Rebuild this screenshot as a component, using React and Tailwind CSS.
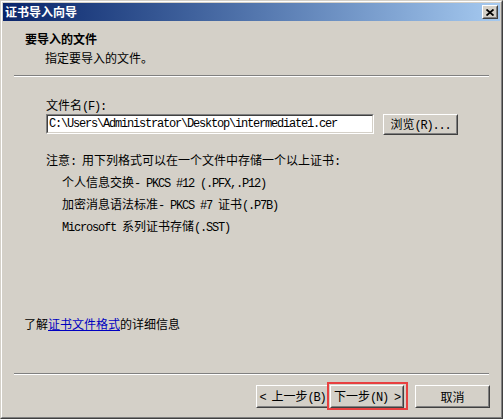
import React from 'react';

const cjk = "font-['Noto_Sans_CJK_SC',sans-serif] text-[12px] leading-[16px] text-black";
const mono = "font-['Liberation_Mono','Noto_Sans_CJK_SC',monospace] text-[12px] tracking-[-1.2px]";

const L = ({ children }) => <span className={mono}>{children}</span>;

// raised 3D button frame, win2000 style
const Raised = ({ className = '', children }) => (
    <div className={`border border-t-white border-l-white border-r-[#404040] border-b-[#404040] ${className}`}>
        <div className="w-full h-full border border-t-[#d4d0c8] border-l-[#d4d0c8] border-r-[#808080] border-b-[#808080] bg-[#d4d0c8] flex items-center justify-center">
            {children}
        </div>
    </div>
);

const Separator = () => (
    <div className="mx-[11px]">
        <div className="h-px bg-[#808080]" />
        <div className="h-px bg-white" />
    </div>
);

export default function App() {
    return (
        <div className={`w-[503px] h-[419px] border border-t-[#d4d0c8] border-l-[#d4d0c8] border-r-[#404040] border-b-[#404040] ${cjk}`}>
            <div className="w-full h-full flex flex-col border border-t-white border-l-white border-r-[#808080] border-b-[#808080] bg-[#d4d0c8] p-px">
                {/* title bar */}
                <div className="h-[18px] flex items-center justify-between bg-linear-to-r from-[#0a246a] to-[#a6caf0] pl-[2px] pr-[2px]">
                    <span className="text-white font-bold text-[12px] leading-[16px]">证书导入向导</span>
                    <Raised className="w-[16px] h-[14px]">
                        <svg width="8" height="7" viewBox="0 0 8 7">
                            <path d="M0.5 0.5 L7.5 6.5 M7.5 0.5 L0.5 6.5" stroke="#000" strokeWidth="1.8" />
                        </svg>
                    </Raised>
                </div>

                {/* header */}
                <div className="pl-[22px] pt-[10px]">
                    <div className="font-bold h-[16px]">要导入的文件</div>
                    <div className="ml-[20px] mt-[3px] h-[16px]">指定要导入的文件。</div>
                </div>
                <div className="mt-[9px]">
                    <Separator />
                </div>

                {/* content */}
                <div className="flex-1 flex flex-col pl-[43px]">
                    <div className="mt-[20px] h-[16px]">文件名<L>(F):</L></div>
                    <div className="flex items-start mt-px">
                        <div className="w-[328px] h-[20px] border border-t-[#808080] border-l-[#808080] border-r-white border-b-white">
                            <div className="w-full h-full border border-t-[#404040] border-l-[#404040] border-r-[#d4d0c8] border-b-[#d4d0c8] bg-white flex items-center pl-px">
                                <span className={`${mono} leading-[14px]`}>{"C:\\Users\\Administrator\\Desktop\\intermediate1.cer"}</span>
                            </div>
                        </div>
                        <Raised className="w-[75px] h-[21px] ml-[9px]">
                            <span>浏览<L>(R)...</L></span>
                        </Raised>
                    </div>
                    <div className="mt-[17px] h-[16px]">注意<L>: </L>用下列格式可以在一个文件中存储一个以上证书<L>:</L></div>
                    <div className="ml-[16px] mt-[6px] flex flex-col gap-[6px]">
                        <div className="h-[16px]">个人信息交换<L>- PKCS #12 (.PFX,.P12)</L></div>
                        <div className="h-[16px]">加密消息语法标准<L>- PKCS #7 </L>证书<L>(.P7B)</L></div>
                        <div className="h-[16px]"><L>Microsoft </L>系列证书存储<L>(.SST)</L></div>
                    </div>
                </div>

                <div className="pl-[21px] mb-[41px] h-[16px]">
                    了解<span className="text-[#0000c0] underline">证书文件格式</span>的详细信息
                </div>

                <Separator />

                {/* buttons */}
                <div className="flex items-center justify-end pr-[10px] pt-[10px] pb-[8px]">
                    <Raised className="w-[73px] h-[23px]">
                        <span><L>&lt; </L>上一步<L>(B)</L></span>
                    </Raised>
                    <div className="relative">
                        <Raised className="w-[74px] h-[23px] ml-px">
                            <span>下一步<L>(N) &gt;</L></span>
                        </Raised>
                        <div className="absolute -left-[2px] -top-[3px] w-[81px] h-[28px] border-2 border-[#e84040]" />
                    </div>
                    <Raised className="w-[75px] h-[23px] ml-[11px]">
                        <span>取消</span>
                    </Raised>
                </div>
            </div>
        </div>
    );
}
